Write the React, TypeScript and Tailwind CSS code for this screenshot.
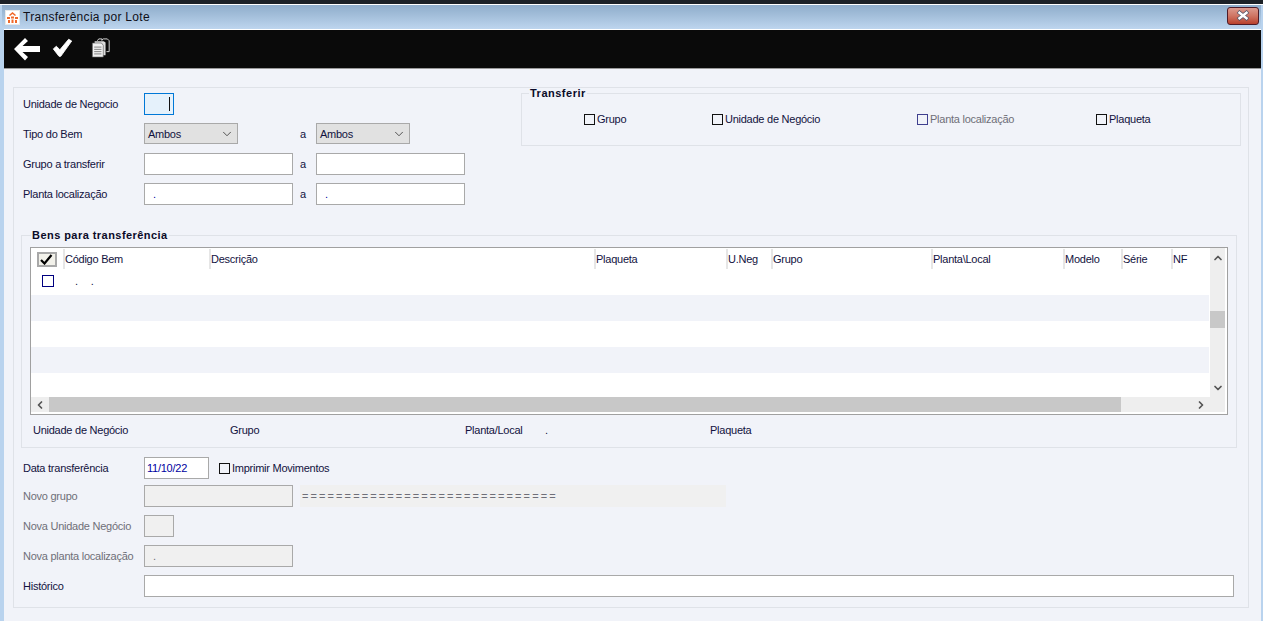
import React from 'react';
import { ChevronDown, ChevronLeft, ChevronRight, ChevronUp } from 'lucide-react';

const columns = ['Código Bem', 'Descrição', 'Plaqueta', 'U.Neg', 'Grupo', 'Planta\\Local', 'Modelo', 'Série', 'NF'];

const Label = ({ children, muted }: { children: React.ReactNode; muted?: boolean }) => (
  <span className={`w-[121px] shrink-0 whitespace-nowrap ${muted ? 'text-[#6f6f78]' : ''}`}>{children}</span>
);

const Field = ({ width, value, muted, blue, tight }: { width: string; value?: string; muted?: boolean; blue?: boolean; tight?: boolean }) => (
  <div
    className={`${width} h-[22px] shrink-0 border flex items-center ${tight ? 'pl-[2px]' : 'pl-[8px]'} ${
      muted ? 'border-[#a9a9a9] bg-[#f0f0f0] text-[#6f6f78]' : 'border-[#a9a9a9] bg-white'
    } ${blue ? 'text-[#0000a0]' : ''}`}
  >
    {value}
  </div>
);

const Combo = () => (
  <div className="w-[94px] h-[21px] shrink-0 border border-[#a9a9a9] bg-[#e1e1e1] flex items-center justify-between pl-[3px] pr-[3px]">
    <span>Ambos</span>
    <ChevronDown className="h-[14px] w-[14px] text-[#333333]" strokeWidth={1.4} />
  </div>
);

const Check = ({ label, muted, className }: { label: string; muted?: boolean; className?: string }) => (
  <div className={`flex items-center gap-[2px] ${className ?? ''}`}>
    <span className={`h-[11px] w-[11px] border ${muted ? 'border-[#3f3f8f]' : 'border-[#111111]'}`} />
    <span className={muted ? 'text-[#6f6f78]' : ''}>{label}</span>
  </div>
);

const Logo = () => (
  <div className="h-[15px] w-[15px] -ml-[1px] bg-white border border-[#e8e8e8] flex items-center justify-center">
    <svg width="11" height="11" viewBox="0 0 11 11" fill="#f0682a">
      <path d="M5.5 0 L9 3 L8 4 L5.5 2 L3 4 L2 3 Z" />
      <path d="M0 5 H3 V7 H0 Z M4 4.5 H7 V6.5 H4 Z M8 5 H11 V7 H8 Z" />
      <path d="M1 8 H3 V11 H1 Z M4.5 7.5 H6.5 V11 H4.5 Z M8 8 H10 V11 H8 Z" />
    </svg>
  </div>
);

export default function App() {
  return (
    <div className="w-[1263px] h-[621px] overflow-hidden flex flex-col bg-[#b9d3ee] font-['Liberation_Sans',sans-serif] text-[11px] leading-[14px] tracking-[-0.25px] text-[#12123e]">
      <div className="h-[4px] bg-[#1c2127] shrink-0" />

      <div className="flex-1 min-h-0 flex flex-col pl-[4px] pr-[2px] border-t border-white">
        {/* Title bar */}
        <div className="h-[24px] -ml-[2px] pl-[4px] pr-[2px] shrink-0 flex items-center justify-between bg-gradient-to-b from-[#8fadcb] to-[#bdd5ee]">
          <div className="flex items-center gap-[3px]">
            <Logo />
            <span className="text-[12px] tracking-[0.3px] text-[#101018]">Transferência por Lote</span>
          </div>
          <div className="w-[32px] h-[18px] mb-[3px] rounded-[3px] border border-[#4e1c28] bg-gradient-to-b from-[#dc9a8e] via-[#cf7463] to-[#b8402c] flex items-center justify-center">
            <svg width="14" height="11" viewBox="0 0 14 11">
              <path d="M2 1.5 L12 9.5 M12 1.5 L2 9.5" stroke="#56566a" strokeWidth="4" />
              <path d="M2.5 2 L11.5 9 M11.5 2 L2.5 9" stroke="#ffffff" strokeWidth="2.4" />
            </svg>
          </div>
        </div>

        {/* Toolbar */}
        <div className="h-[40px] shrink-0 bg-[#0a0a0a] border-t border-white border-b border-b-[#9a9a9a] flex items-center pl-[9px]">
          <svg width="28" height="24" viewBox="0 0 28 24" fill="#ffffff">
            <path d="M12 1 L15 4 L9.5 9 H27 V15 H9.5 L15 20 L12 23.5 L1 12 Z" />
          </svg>
          <svg className="ml-[11px] mb-[2px]" width="21" height="20" viewBox="0 0 24 22" fill="#ffffff" stroke="#ffffff" strokeWidth="1" strokeLinejoin="round">
            <path d="M1.5 12 L5 9 L9 13 L19 1 L22.5 3 L10 20.5 H8 Z" />
          </svg>
          <svg className="ml-[18px] mb-[2px]" width="20" height="20" viewBox="0 0 22 22" fill="none">
            <path d="M7 3 L8.5 1 H12 V3 M12 2 L13.5 1 H18 L20 3 V15 H17" stroke="#e4e4e4" />
            <path d="M4 3.5 H14 L16 5 V19 H4 Z" fill="#dcdcdc" />
            <path d="M1.5 5.5 H11.5 L13.5 8 V21 H1.5 Z" fill="#f0f0f0" stroke="#555555" strokeWidth="0.7" />
            <path d="M3.5 10 H11.5 M3.5 12.5 H11.5 M3.5 15 H11.5 M3.5 17.5 H11.5" stroke="#777777" />
          </svg>
        </div>

        {/* Body */}
        <div className="flex-1 min-h-0 bg-[#f1f3f9] pl-[9px] pr-[12px] pt-[18px]">
          <div className="border border-[#dfe2e8] pl-[7px] pr-[7px] pb-[10px] pt-[5px]">
            <div className="flex items-start">
              <div className="ml-[2px] w-[498px] shrink-0 flex flex-col gap-[8px]">
                <div className="flex items-center h-[22px]">
                  <Label>Unidade de Negocio</Label>
                  <div className="w-[30px] h-[22px] border border-[#0078d7] bg-[#e5f1fb] flex justify-end items-center pr-[3px]">
                    <span className="h-[14px] w-px bg-[#111111]" />
                  </div>
                </div>
                <div className="flex items-center h-[21px]">
                  <Label>Tipo do Bem</Label>
                  <Combo />
                  <span className="w-[78px] pl-[62px]">a</span>
                  <Combo />
                </div>
                <div className="flex items-center h-[22px] mt-[1px]">
                  <Label>Grupo a transferir</Label>
                  <Field width="w-[149px]" />
                  <span className="w-[23px] pl-[7px]">a</span>
                  <Field width="w-[149px]" />
                </div>
                <div className="flex items-center h-[22px]">
                  <Label>Planta localização</Label>
                  <Field width="w-[149px]" value="." blue />
                  <span className="w-[23px] pl-[7px]">a</span>
                  <Field width="w-[149px]" value="." blue />
                </div>
              </div>

              <fieldset className="w-[720px] h-[59px] shrink-0 -mt-[6px] border border-[#dfe2e8]">
                <legend className="ml-[7px] px-[1px] font-bold leading-[13px] tracking-[0.5px] text-[#0a0a28]">Transferir</legend>
                <div className="flex items-center mt-[12px] pl-[62px]">
                  <Check label="Grupo" className="w-[128px]" />
                  <Check label="Unidade de Negócio" className="w-[205px]" />
                  <Check label="Planta localização" muted className="w-[179px]" />
                  <Check label="Plaqueta" />
                </div>
              </fieldset>
            </div>

            <fieldset className="mt-[24px] mr-[4px] border border-[#dfe2e8] px-[8px]">
              <legend className="ml-[1px] px-[1px] font-bold leading-[13px] tracking-[0.45px] text-[#0a0a28]">Bens para transferência</legend>
              <div className="mt-[5px] h-[168px] border border-[#a0a0a0] bg-white flex flex-col">
                <div className="flex-1 min-h-0 flex">
                  <div className="flex-1 min-w-0 flex flex-col">
                    <div className="h-[21px] shrink-0 grid grid-cols-[32px_146px_385px_132px_45px_160px_132px_58px_50px_1fr] items-stretch">
                      <div className="flex items-center justify-center pt-[1px] pr-[1px]">
                        <div className="w-[20px] h-[15px] border-[2px] border-[#a8a8a8] bg-[#f2f1ea] flex items-center justify-center">
                          <svg width="13" height="11" viewBox="0 0 13 11">
                            <path d="M1 6 L4.5 9.5 L11.5 1" fill="none" stroke="#000000" strokeWidth="2.2" />
                          </svg>
                        </div>
                      </div>
                      {columns.map(name => (
                        <div key={name} className="mt-[1px] border-l-2 border-[#e6e6e6] flex items-center whitespace-nowrap">
                          {name}
                        </div>
                      ))}
                    </div>
                    <div className="h-[26px] shrink-0 flex items-center pl-[11px] pb-[3px]">
                      <span className="h-[12px] w-[12px] border-[1.5px] border-[#000080]" />
                      <span className="ml-[21px] mt-[1px]">.</span>
                      <span className="ml-[13px] mt-[1px]">.</span>
                    </div>
                    <div className="h-[26px] shrink-0 bg-[#f1f3f9] mr-px" />
                    <div className="h-[26px] shrink-0" />
                    <div className="h-[26px] shrink-0 bg-[#f1f3f9] mr-px" />
                    <div className="flex-1" />
                  </div>
                  <div className="w-[15px] mr-[2px] shrink-0 bg-[#eeeeee] flex flex-col items-center">
                    <ChevronUp className="h-[12px] w-[12px] mt-[4px] text-[#555555]" strokeWidth={3.5} />
                    <div className="w-full h-[17px] mt-[47px] bg-[#c8c8c8]" />
                    <ChevronDown className="h-[12px] w-[12px] mt-auto mb-[3px] text-[#555555]" strokeWidth={3.5} />
                  </div>
                </div>
                <div className="h-[15px] mb-[2px] mr-[2px] shrink-0 bg-[#eeeeee] flex items-center">
                  <div className="w-[18px] flex justify-center">
                    <ChevronLeft className="h-[12px] w-[12px] text-[#555555]" strokeWidth={3.5} />
                  </div>
                  <div className="w-[1072px] h-full bg-[#c8c8c8]" />
                  <ChevronRight className="h-[12px] w-[12px] ml-[74px] text-[#555555]" strokeWidth={3.5} />
                </div>
              </div>
              <div className="h-[32px] pb-[2px] flex items-center pl-[3px]">
                <span className="w-[197px]">Unidade de Negócio</span>
                <span className="w-[235px]">Grupo</span>
                <span className="w-[80px]">Planta/Local</span>
                <span className="w-[165px]">.</span>
                <span>Plaqueta</span>
              </div>
            </fieldset>

            <div className="ml-[2px] mt-[9px] flex flex-col gap-[8px]">
              <div className="flex items-center h-[22px] -mb-[2px]">
                <Label>Data transferência</Label>
                <Field width="w-[65px]" value="11/10/22" blue tight />
                <Check label="Imprimir Movimentos" className="ml-[10px]" />
              </div>
              <div className="flex items-center h-[22px]">
                <Label muted>Novo grupo</Label>
                <Field width="w-[149px]" muted />
                <div className="ml-[7px] w-[426px] h-[22px] bg-[#f0f0f0] text-[#6f6f78] flex items-center pl-[2px] tracking-[2.1px] overflow-hidden whitespace-nowrap">
                  ==============================
                </div>
              </div>
              <div className="flex items-center h-[22px]">
                <Label muted>Nova Unidade Negócio</Label>
                <Field width="w-[30px]" muted />
              </div>
              <div className="flex items-center h-[22px]">
                <Label muted>Nova planta localização</Label>
                <Field width="w-[149px]" value="." muted />
              </div>
              <div className="flex items-center h-[22px]">
                <Label>Histórico</Label>
                <Field width="w-[1090px]" />
              </div>
            </div>
          </div>
        </div>
      </div>
    </div>
  );
}
